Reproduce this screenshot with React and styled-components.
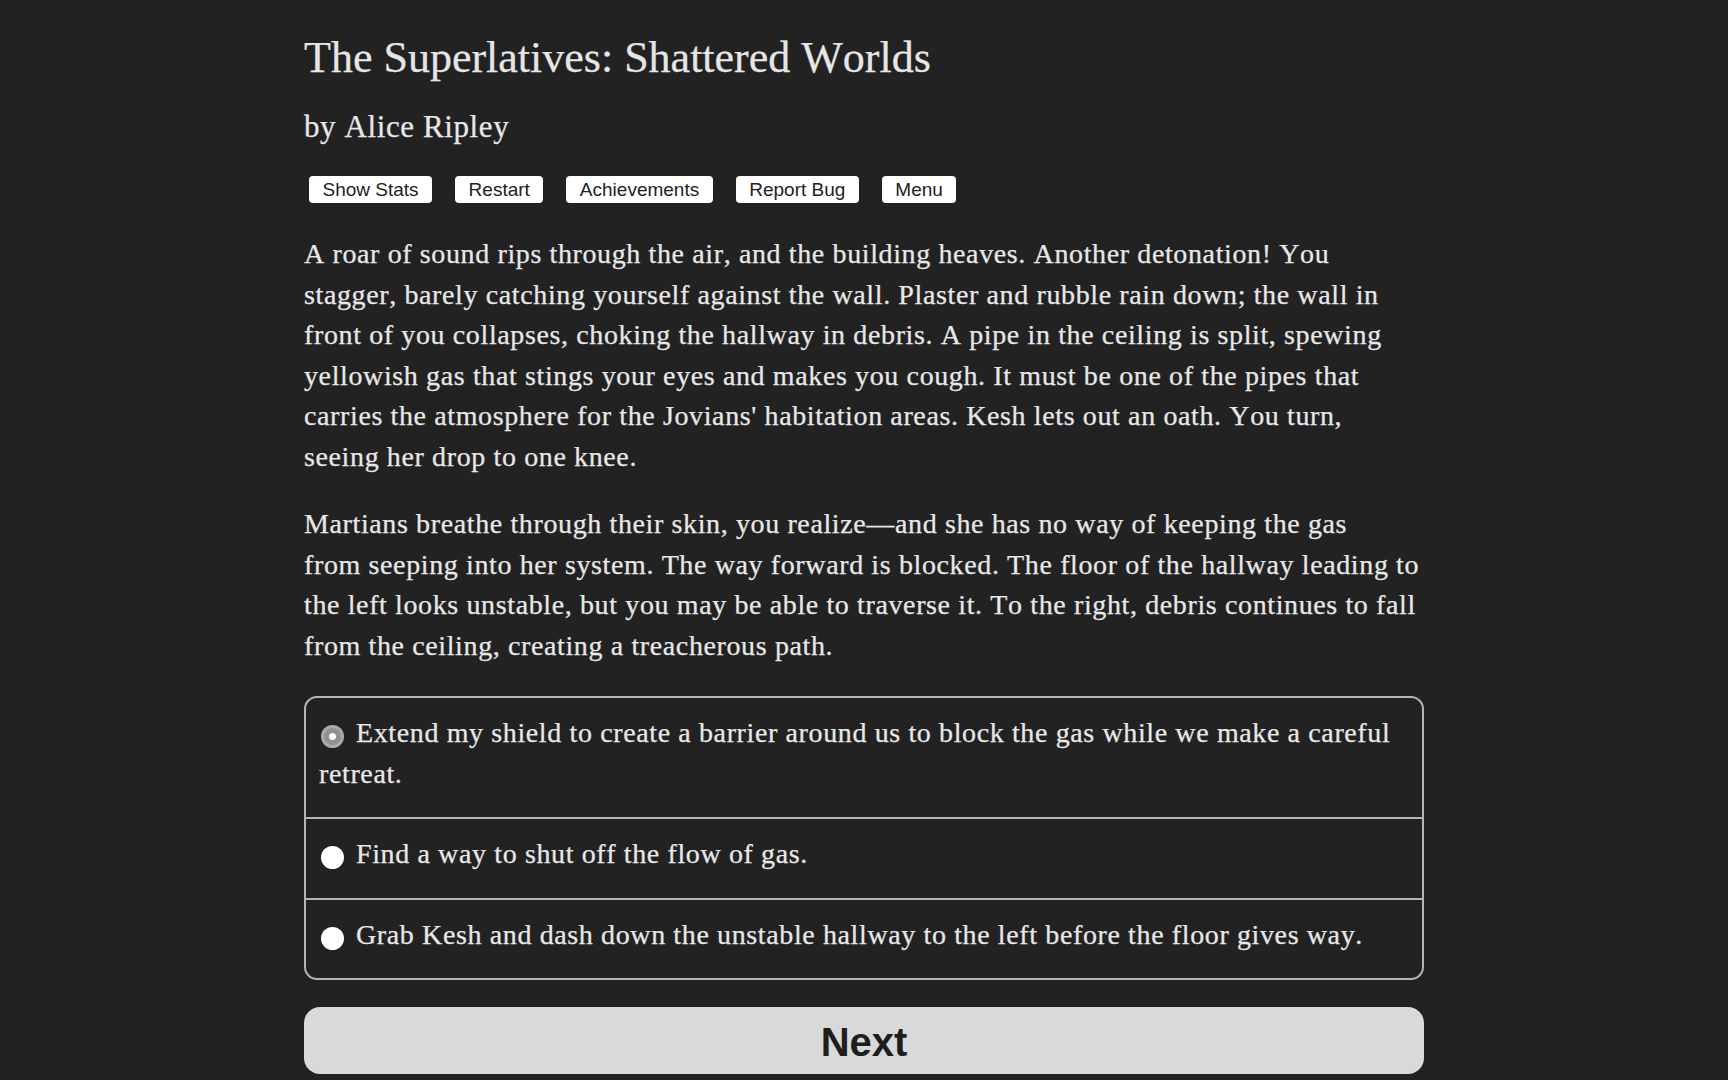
import React from 'react'
import styled, { createGlobalStyle } from 'styled-components'

// paragraphs wrap on their own; a "\n" marks a hard line break
const passage = [
  "A roar of sound rips through the air, and the building heaves. Another detonation! You stagger, barely catching yourself against the wall. Plaster and rubble rain down; the wall in front of you collapses, choking the hallway in debris. A pipe in the ceiling is split, spewing yellowish gas that stings your eyes and makes you cough. It must be one of the pipes that carries the atmosphere for the Jovians' habitation areas. Kesh lets out an oath. You turn, seeing her drop to one knee.",
  "Martians breathe through their skin, you realize\u2014and she has no way of keeping the gas\nfrom seeping into her system. The way forward is blocked. The floor of the hallway leading to the left looks unstable, but you may be able to traverse it. To the right, debris continues to fall from the ceiling, creating a treacherous path.",
]

const choices = [
  'Extend my shield to create a barrier around us to block the gas while we make a careful retreat.',
  'Find a way to shut off the flow of gas.',
  'Grab Kesh and dash down the unstable hallway to the left before the floor gives way.',
]

const tools = ['Show Stats', 'Restart', 'Achievements', 'Report Bug', 'Menu']

const Story = () => {
  const [picked, setPicked] = React.useState(0)
  return (
    <>
      <GlobalStyle />
      <Page>
        <Title>The Superlatives: Shattered Worlds</Title>
        <Byline>by Alice Ripley</Byline>
        <Toolbar>
          {tools.map((t) => (
            <ToolButton key={t}>{t}</ToolButton>
          ))}
        </Toolbar>
        <Passage>
          {passage.map((p, i) => (
            <Para key={i}>{p}</Para>
          ))}
        </Passage>
        <ChoiceList>
          {choices.map((c, i) => (
            <ChoiceRow key={i} onClick={() => setPicked(i)}>
              <Radio $checked={picked === i} />
              {c}
            </ChoiceRow>
          ))}
        </ChoiceList>
        <NextButton>Next</NextButton>
      </Page>
    </>
  )
}

export default Story

const GlobalStyle = createGlobalStyle`
    body {
        margin: 0;
        background-color: #222222;
    }
`

const Page = styled.main`
    width: 1120px;
    margin: 0 auto;
    padding-top: 32px;
    font-family: "Liberation Serif", "Times New Roman", serif;
    font-kerning: none;
    color: #e8e8e8;
    -webkit-text-stroke: 0.25px currentColor;
`
const Title = styled.h1`
    margin: 0;
    font-size: 44px;
    line-height: 52px;
    font-weight: 400;
    color: #e6e6e6;
`
const Byline = styled.h2`
    margin: 24px 0 0;
    font-size: 31px;
    line-height: 38px;
    font-weight: 400;
    letter-spacing: 0.6px;
`
const Toolbar = styled.nav`
    display: flex;
    gap: 23px;
    margin: 30px 0 0 5px;
`
const ToolButton = styled.button`
    height: 27px;
    padding: 0 13.5px;
    border: none;
    border-radius: 4px;
    background-color: #ffffff;
    color: #222222;
    font-family: "Liberation Sans", Arial, sans-serif;
    font-size: 19px;
    line-height: 27px;
    -webkit-text-stroke: 0;
`
const Passage = styled.section`
    margin-top: 31px;
`
const Para = styled.p`
    margin: 0;
    font-size: 28px;
    line-height: 40.5px;
    letter-spacing: 0.62px;
    white-space: pre-line;

    & + & {
        margin-top: 27px;
    }
`
const ChoiceList = styled.div`
    margin-top: 30px;
    border: 2px solid #b5b5b5;
    border-radius: 13px;
`
const ChoiceRow = styled.label`
    display: block;
    padding: 15px 16px 23px 13px;
    font-size: 28px;
    line-height: 40.5px;
    letter-spacing: 0.62px;
    cursor: pointer;

    & + & {
        border-top: 2px solid #b5b5b5;
    }
`
const Radio = styled.span`
    display: inline-block;
    width: 23px;
    height: 23px;
    margin: 0 12px 0 2px;
    border-radius: 50%;
    vertical-align: -6px;
    background: ${(p) =>
      p.$checked
        ? 'radial-gradient(circle, #ffffff 0 3px, #929292 4px 8px, #ababab 9px)'
        : '#ffffff'};
`
const NextButton = styled.button`
    display: block;
    width: 100%;
    height: 67px;
    margin-top: 27px;
    padding: 4px 0 0;
    border: none;
    border-radius: 16px;
    background-color: #d9d9d9;
    color: #1e1e1e;
    font-family: "Liberation Sans", Arial, sans-serif;
    font-size: 40px;
    font-weight: 700;
    -webkit-text-stroke: 0;
`
